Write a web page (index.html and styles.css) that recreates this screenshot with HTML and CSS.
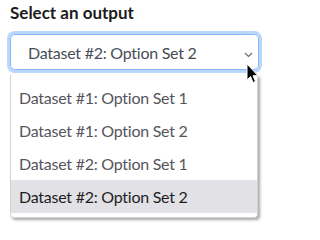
FILE: index.html
```html
<!DOCTYPE html>
<html>
<head>
<meta charset="utf-8">
<link rel="stylesheet" href="styles.css">
</head>
<body>
<div class="field">
  <label class="label">Select an output</label>
  <div class="select">
    <span class="value">Dataset #2: Option Set 2</span>
    <svg class="chevron" width="9" height="6" viewBox="0 0 9 6"><path d="M1 1 L4.5 4.5 L8 1" fill="none" stroke="#6c6c6c" stroke-width="1.2"/></svg>
  </div>
  <ul class="menu">
    <li class="item">Dataset #1: Option Set 1</li>
    <li class="item">Dataset #1: Option Set 2</li>
    <li class="item">Dataset #2: Option Set 1</li>
    <li class="item active">Dataset #2: Option Set 2</li>
  </ul>
</div>
<svg class="cursor" width="13" height="21" viewBox="0 0 13 21"><path d="M1 1 L1 17 L4.5 13.5 L7 19.5 L9.5 18.5 L7 12.7 L12 12.7 Z" fill="#000" stroke="#fff" stroke-width="1" stroke-linejoin="round"/></svg>
</body>
</html>
```

FILE: styles.css
```css
html, body {
  margin: 0;
  padding: 0;
  background: #fff;
}
body {
  font-family: "Lato", "Noto Sans", sans-serif;
  width: 274px;
  height: 235px;
  overflow: hidden;
  position: relative;
}
.field {
  padding: 3px 15px 0 10px;
  display: flex;
  flex-direction: column;
}
.label {
  font-weight: 700;
  font-size: 17px;
  color: #1c1c1c;
  line-height: 20px;
  margin-bottom: 11px;
}
.select {
  height: 34px;
  border: 1px solid #86b7fe;
  border-radius: 5px;
  box-shadow: 0 0 0 3px #bcd6fb;
  display: flex;
  align-items: center;
  padding: 0 5px 0 17px;
  color: #474d55;
  font-size: 16px;
  letter-spacing: -0.25px;
}
.value {
  flex: 1;
}
.chevron {
  margin-top: 5px;
}
.menu {
  list-style: none;
  margin: 5px 1px 0 0;
  padding: 6px 0 4px 0;
  border: 1px solid #d3d3d6;
  border-top: none;
  border-radius: 0 0 4px 4px;
  box-shadow: 2px 2px 3px rgba(0, 0, 0, 0.35);
  background: #fff;
}
.item {
  height: 33px;
  line-height: 33px;
  padding-left: 8px;
  font-size: 16px;
  letter-spacing: -0.25px;
  color: #55555b;
}
.item.active {
  background: #e1e1e6;
  color: #1e1e22;
}
.cursor {
  position: absolute;
  left: 246px;
  top: 63px;
}
```
